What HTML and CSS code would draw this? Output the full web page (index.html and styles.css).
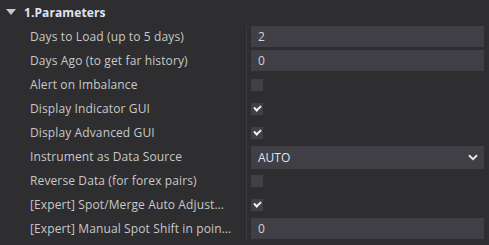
FILE: index.html
```html
<!DOCTYPE html>
<html lang="en">
<head>
    <meta charset="UTF-8">
    <title>Parameters</title>
    <link rel="stylesheet" href="styles.css">
</head>
<body>
    <div class="panel">
        <div class="group-head">
            <span class="caret"></span>
            <span class="group-title">1.Parameters</span>
        </div>
        <div class="rows">
            <div class="row">
                <div class="label">Days to Load (up to 5 days)</div>
                <div class="value"><div class="input">2</div></div>
            </div>
            <div class="row">
                <div class="label">Days Ago (to get far history)</div>
                <div class="value"><div class="input">0</div></div>
            </div>
            <div class="row">
                <div class="label">Alert on Imbalance</div>
                <div class="value"><span class="check"></span></div>
            </div>
            <div class="row">
                <div class="label">Display Indicator GUI</div>
                <div class="value"><span class="check on"></span></div>
            </div>
            <div class="row">
                <div class="label">Display Advanced GUI</div>
                <div class="value"><span class="check on"></span></div>
            </div>
            <div class="row">
                <div class="label">Instrument as Data Source</div>
                <div class="value">
                    <div class="input select">
                        <span>AUTO</span>
                        <svg class="chevron" width="10" height="7" viewBox="0 0 10 7"><path d="M1 1.2 L5 5.2 L9 1.2" fill="none" stroke="#e6e6e6" stroke-width="2"/></svg>
                    </div>
                </div>
            </div>
            <div class="row">
                <div class="label">Reverse Data (for forex pairs)</div>
                <div class="value"><span class="check"></span></div>
            </div>
            <div class="row">
                <div class="label">[Expert] Spot/Merge Auto Adjustment</div>
                <div class="value"><span class="check on"></span></div>
            </div>
            <div class="row">
                <div class="label">[Expert] Manual Spot Shift in points</div>
                <div class="value"><div class="input">0</div></div>
            </div>
        </div>
    </div>
</body>
</html>
```

FILE: styles.css
```css
* {
    margin: 0;
    padding: 0;
    box-sizing: border-box;
}

body {
    background: #2e2e30;
    font-family: 'Open Sans', sans-serif;
    font-size: 12px;
    color: #c8c8c8;
    overflow: hidden;
}

.panel {
    width: 489px;
}

.group-head {
    display: flex;
    align-items: center;
    height: 25px;
    padding-left: 6px;
    padding-bottom: 1px;
}

.caret {
    width: 0;
    height: 0;
    border-left: 5px solid transparent;
    border-right: 5px solid transparent;
    border-top: 6px solid #c8c8cc;
    margin-right: 8px;
}

.group-title {
    font-weight: 700;
    color: #dde4f2;
    letter-spacing: 0.1px;
}

.row {
    display: grid;
    grid-template-columns: 246px 1fr;
    height: 24px;
}

.label {
    padding-left: 30px;
    padding-right: 15px;
    overflow: hidden;
    white-space: nowrap;
    text-overflow: ellipsis;
    line-height: 24px;
    letter-spacing: 0.12px;
}

.value {
    border-left: 1px solid #3a3a3d;
    padding: 1px 5px 2px 4px;
    display: flex;
    align-items: center;
}

.input {
    flex: 1;
    height: 21px;
    background: #3f3f45;
    color: #d4d4d8;
    padding-left: 7px;
    line-height: 21px;
}

.select {
    height: 23px;
    line-height: 23px;
    display: flex;
    align-items: center;
    justify-content: space-between;
    padding-right: 6px;
    color: #dfe4f0;
}

.check {
    width: 12px;
    height: 12px;
    background: #404046;
    position: relative;
}

.check.on::after {
    content: "";
    position: absolute;
    left: 3px;
    top: 2px;
    width: 5px;
    height: 3px;
    border-left: 2px solid #f0f0f0;
    border-bottom: 2px solid #f0f0f0;
    transform: rotate(-45deg);
}
```
